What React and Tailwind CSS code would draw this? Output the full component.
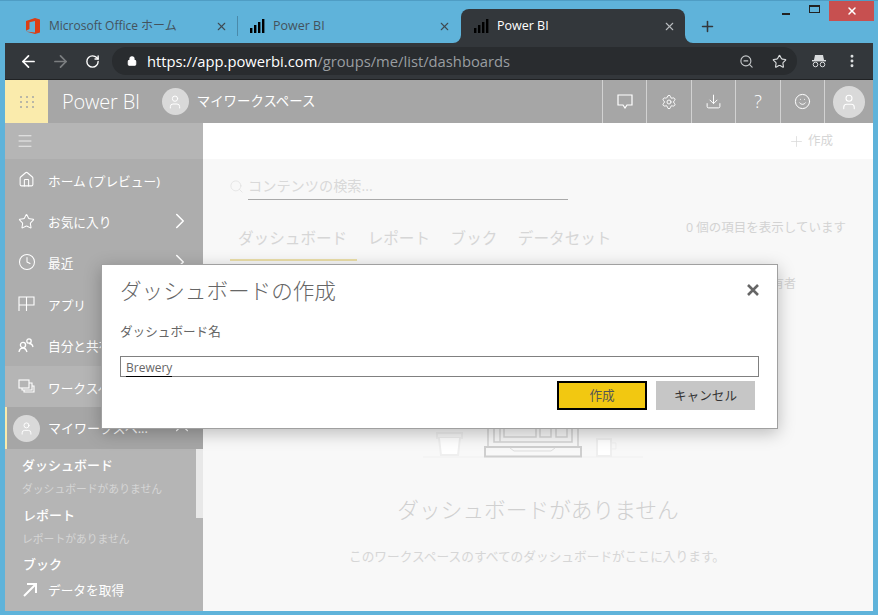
import React from "react";
import { ArrowLeft, ArrowRight, RotateCw, Lock, ZoomOut, Star, MoreVertical, X, Plus, Settings, Download, Smile, User, Home, Clock, ChevronRight, ChevronUp, Search, Menu } from "lucide-react";

const jp = "font-['Open_Sans','Noto_Sans_CJK_JP',sans-serif]";

function Bars({ className = "" }) {
  return (
    <svg width="16" height="14" viewBox="0 0 16 14" className={className}>
      <rect x="1" y="9" width="2.4" height="5" fill="currentColor" />
      <rect x="5" y="6" width="2.4" height="8" fill="currentColor" />
      <rect x="9" y="3" width="2.4" height="11" fill="currentColor" />
      <rect x="13" y="0" width="2.4" height="14" fill="currentColor" />
    </svg>
  );
}

function OfficeLogo() {
  return (
    <svg width="14" height="16" viewBox="0 0 14 16">
      <path d="M0 3 L9 0 L14 1.5 V14.5 L9 16 L0 13.5 L9 14.5 V3 L3.5 4.3 V11 L0 12.8 Z" fill="#dc3e15" />
    </svg>
  );
}

function Avatar({ size, icon }) {
  return (
    <div className="rounded-full bg-[#d9d9d9] flex items-center justify-center shrink-0" style={{ width: size, height: size }}>
      <User size={icon} strokeWidth={1.5} color="#fff" />
    </div>
  );
}

function AppIconCell({ children }) {
  return <div className="w-[44.4px] h-full border-l border-[#d2d2d2] flex items-center justify-center text-white">{children}</div>;
}

function NavItem({ icon, label, chevron }) {
  return (
    <div className="h-[41.4px] flex items-center pl-[13px] pt-[3px] shrink-0">
      <div className="w-[30px] flex justify-start text-white -mt-[3px]">{icon}</div>
      <span className="text-[12.7px] text-white whitespace-nowrap">{label}</span>
      {chevron && <ChevronRight size={26} strokeWidth={1.4} className="ml-auto mr-[10px] -mt-[3px] text-white" />}
    </div>
  );
}

export default function App() {
  return (
    <div className={`w-[878px] h-[615px] relative overflow-hidden bg-[#5fb3da] flex flex-col border-t border-[#4f9dc4] ${jp}`}>
      {/* tab strip */}
      <div className="h-[42px] relative flex items-end pl-[5px] pr-[4px] shrink-0">
        <div className="w-[232px] h-[34px] flex items-center pl-[21px] pr-[9px] text-[#44525c] text-[12px]">
          <OfficeLogo />
          <span className="ml-[9px] whitespace-nowrap">Microsoft Office ホーム</span>
          <X size={13} strokeWidth={2} className="ml-auto text-[#3f4a52]" />
        </div>
        <div className="w-px h-[20px] bg-[#4a8aaa] mb-[7px]" />
        <div className="w-[223px] h-[34px] flex items-center pl-[11px] pr-[10px] text-[#44525c] text-[12.5px]">
          <Bars className="text-black" />
          <span className="ml-[8px]">Power BI</span>
          <X size={13} strokeWidth={2} className="ml-auto text-[#3f4a52]" />
        </div>
        <div className="w-[224px] h-[34px] bg-[#33373b] rounded-t-[8px] flex items-center pl-[12px] pr-[9px] text-white text-[12.5px] relative">
          <svg width="8" height="8" viewBox="0 0 8 8" className="absolute -left-[8px] bottom-0"><path d="M8 0 V8 H0 A8 8 0 0 0 8 0 Z" fill="#33373b" /></svg>
          <svg width="8" height="8" viewBox="0 0 8 8" className="absolute -right-[8px] bottom-0"><path d="M0 0 V8 H8 A8 8 0 0 1 0 0 Z" fill="#33373b" /></svg>
          <Bars className="text-black" />
          <span className="ml-[8px]">Power BI</span>
          <X size={13} strokeWidth={2} className="ml-auto text-[#b8bcbf]" />
        </div>
        <div className="ml-[14px] h-[34px] flex items-center text-[#33373b]">
          <Plus size={17} strokeWidth={2.2} />
        </div>
        <div className="absolute right-[4px] top-0 flex items-start">
          <div className="w-[26px] h-[15px] flex items-end justify-center pb-[1px] mr-[1px]"><div className="w-[8px] h-[2px] bg-[#222]" /></div>
          <div className="w-[29px] h-[15px] flex items-center justify-center"><div className="w-[11px] h-[8px] border border-t-2 border-[#222]" /></div>
          <div className="w-[45px] h-[20px] bg-[#c75050] flex items-center justify-center"><X size={12} strokeWidth={3} color="#fff" /></div>
        </div>
      </div>
      {/* chrome toolbar */}
      <div className="h-[37px] mx-[5px] bg-[#33373b] flex items-center pl-[14px] pr-[13px] shrink-0 border-b border-[#202224]">
        <ArrowLeft size={19} strokeWidth={2.2} className="text-white" />
        <ArrowRight size={19} strokeWidth={2.2} className="text-[#7b7e80] ml-[13px]" />
        <RotateCw size={15} strokeWidth={2.2} className="text-white ml-[15px]" />
        <div className="ml-[12px] w-[685px] h-[28px] rounded-full bg-[#292c2f] flex items-center pl-[15px] pr-[10px]">
          <Lock size={10} strokeWidth={2.5} className="text-white" fill="#fff" />
          <span className="ml-[10px] text-[14.75px] text-white whitespace-nowrap">https://app.powerbi.com<span className="text-[#9a9ea1]">/groups/me/list/dashboards</span></span>
          <ZoomOut size={15} strokeWidth={1.8} className="ml-auto text-[#c5c8ca]" />
          <Star size={15} strokeWidth={1.8} className="ml-[18px] text-[#dadcdd]" />
        </div>
        <svg width="16" height="14" viewBox="0 0 16 14" className="ml-[14px] text-[#d9dbdd]">
          <path d="M4 1 H12 L13 6 H3 Z" fill="currentColor" />
          <rect x="1" y="6" width="14" height="1.4" fill="currentColor" />
          <circle cx="4.5" cy="10.5" r="2.3" fill="none" stroke="currentColor" />
          <circle cx="11.5" cy="10.5" r="2.3" fill="none" stroke="currentColor" />
        </svg>
        <MoreVertical size={16} strokeWidth={2.4} className="ml-auto text-[#dfe1e2]" />
      </div>
      {/* app bar */}
      <div className="h-[43px] mx-[5px] bg-[#a6a6a6] flex items-center shrink-0">
        <div className="w-[43px] h-full bg-[#faebac] grid grid-cols-3 gap-[3px] content-center justify-center justify-items-center px-[14px]">
          {[0,1,2,3,4,5,6,7,8].map(i => <div key={i} className="w-[2px] h-[2px] bg-[#b9b7a7]" />)}
        </div>
        <span className="ml-[14px] text-[20px] font-light text-white tracking-[-0.2px]">Power BI</span>
        <div className="ml-[22px]"><Avatar size={27} icon={16} /></div>
        <span className="ml-[8px] text-[13.4px] text-white whitespace-nowrap">マイワークスペース</span>
        <div className="ml-auto flex items-center h-full">
          <AppIconCell>
            <svg width="16" height="15" viewBox="0 0 16 15"><path d="M1 1 H15 V11 H10 L8 14 L6 11 H1 Z" fill="none" stroke="#fff" strokeWidth="1.2" /></svg>
          </AppIconCell>
          <AppIconCell><Settings size={16} strokeWidth={1.4} /></AppIconCell>
          <AppIconCell><Download size={17} strokeWidth={1.4} /></AppIconCell>
          <AppIconCell><span className="text-[18px] font-light">?</span></AppIconCell>
          <AppIconCell><Smile size={17} strokeWidth={1.4} /></AppIconCell>
          <div className="w-[49px] h-full border-l border-[#d2d2d2] flex items-center justify-center"><Avatar size={32} icon={18} /></div>
        </div>
      </div>
      {/* body */}
      <div className="flex-1 mx-[5px] mb-[4px] flex min-h-0">
        <aside className="w-[198px] bg-[#b5b5b5] flex flex-col shrink-0 overflow-hidden">
          <div className="h-[36px] flex items-center pl-[11px] shrink-0"><Menu size={18} strokeWidth={1} className="text-white" /></div>
          <div className="bg-[#adadad] flex flex-col shrink-0">
            <NavItem icon={<Home size={17} strokeWidth={1.5} />} label="ホーム (プレビュー)" />
            <NavItem icon={<Star size={17} strokeWidth={1.5} />} label="お気に入り" chevron />
            <NavItem icon={<Clock size={18} strokeWidth={1.4} />} label="最近" chevron />
            <NavItem icon={<svg width="17" height="16" viewBox="0 0 17 16" fill="none" stroke="#fff" strokeWidth="1.1"><path d="M1 1 H16 V9 H1 Z M8.5 1 V15 M1 9 V15" /></svg>} label="アプリ" />
            <NavItem icon={<svg width="17" height="15" viewBox="0 0 17 15" fill="none" stroke="#fff" strokeWidth="1.3"><circle cx="5" cy="7" r="2.6" /><circle cx="11" cy="3" r="2.2" /><path d="M1 14 C1.5 11 3 10 5 10 C7 10 8 11 9 14 M11 5.5 C13 5.5 14.5 6.5 15 9" /></svg>} label="自分と共有" />
          </div>
          <NavItem icon={<svg width="17" height="15" viewBox="0 0 17 15" fill="none" stroke="#fff" strokeWidth="1.1"><rect x="1" y="1" width="10" height="8" /><path d="M11 4 H14 V11 H4 V9 M14 7 H16 V13 H6 V11" /></svg>} label="ワークスペース" />
          <div className="h-[42px] bg-[#a6a6a6] border-l-2 border-[#faebac] flex items-center pl-[6px] shrink-0">
            <Avatar size={27} icon={15} />
            <span className="ml-[8px] text-[13px] text-white whitespace-nowrap">マイワークスペ...</span>
            <ChevronUp size={22} strokeWidth={1.2} className="ml-auto mr-[10px] text-white" />
          </div>
          <div className="flex-1 relative pl-[17px] pt-[5px]">
            <div className="absolute right-0 top-0 w-[7px] h-[69px] bg-[#e8e8e8]" />
            <div className="text-[13px] font-medium text-white h-[22px] leading-[22px]">ダッシュボード</div>
            <div className="text-[10.8px] text-[#d6d6d6] h-[24px] leading-[24px] mt-[1px]">ダッシュボードがありません</div>
            <div className="text-[13px] font-medium text-white h-[26px] leading-[26px] mt-[1px] ml-[1px]">レポート</div>
            <div className="text-[10.8px] text-[#d6d6d6] h-[20px] leading-[20px] mt-[1px]">レポートがありません</div>
            <div className="text-[13px] font-medium text-white h-[26px] leading-[26px] mt-[2px] ml-[1px]">ブック</div>
            <div className="flex items-center h-[26px] -ml-[1px]">
              <svg width="16" height="16" viewBox="0 0 16 16" fill="none" stroke="#fff" strokeWidth="2" className="ml-[1px]"><path d="M2 14 L14 2 M5 2 H14 V11" /></svg>
              <span className="ml-[10px] text-[12.7px] text-white">データを取得</span>
            </div>
          </div>
        </aside>
        <main className="flex-1 min-w-0 flex flex-col bg-[#f8f8f8]">
          <div className="h-[36px] bg-white flex items-center justify-end pr-[40px] text-[#d6d6d6] text-[12.5px] shrink-0">
            <Plus size={17} strokeWidth={1} />
            <span className="ml-[3px]">作成</span>
          </div>
          <div className="flex-1 relative flex flex-col min-h-0">
            <div className="flex items-end pl-[26px] h-[41px]">
              <Search size={15} strokeWidth={1} className="text-[#dcdcdc] mb-[6px] mr-[4px]" />
              <div className="w-[320px] h-[27px] border-b border-[#aaa] text-[14.2px] text-[#d9d9d9] leading-[26px]">コンテンツの検索...</div>
            </div>
            <div className="flex justify-between items-start h-[66px] pl-[35px] pr-[27px] pt-[27px]">
              <div className="flex gap-[20.5px] text-[15.6px] text-[#d6d6d6] whitespace-nowrap">
                <span>ダッシュボード</span><span>レポート</span><span>ブック</span><span>データセット</span>
              </div>
              <span className="text-[12.5px] text-[#d3d3d3] whitespace-nowrap -mt-[8px]">0 個の項目を表示しています</span>
            </div>
          </div>
        </main>
      </div>

      {/* backdrop content hidden under the dialog */}
      <div className="absolute left-[230px] top-[258px] w-[127px] h-[2px] bg-[#ecdfa9]" />
      <div className="absolute left-[746px] top-[274px] text-[12px] text-[#d3d3d3] w-[50px] text-right">有者</div>

      {/* empty state */}
      <div className="absolute left-[203px] right-[5px] top-[427px] flex flex-col items-center">
        <svg width="220" height="30" viewBox="0 0 220 30" className="block -ml-[10px]">
          <rect x="0" y="28.5" width="220" height="1" fill="#efefef" />
          <rect x="14" y="5" width="25" height="5" fill="none" stroke="#efefef" strokeWidth="2" />
          <path d="M16 10 L18 27 H35 L37 10" fill="#fff" stroke="#efefef" strokeWidth="2" />
          <path d="M65 0 V18 M71 0 V14 H149 V0 M155 0 V18" fill="none" stroke="#d2d2d2" strokeWidth="1.5" />
          <rect x="62" y="19" width="96" height="9.5" fill="none" stroke="#cfcfcf" strokeWidth="2" />
          <path d="M87 20 L91 23 H128 L132 20" fill="none" stroke="#dddddd" />
          <path d="M77 0 V14 M81 0 V9 H113 V0 M117 0 V9 H128 V0 M133 0 V9 H144 V0" fill="none" stroke="#d6d6d6" strokeWidth="1.5" />
          <rect x="174" y="11" width="14" height="17" fill="#fff" stroke="#efefef" strokeWidth="2" />
          <path d="M189 15 H193 V21 H189" fill="none" stroke="#efefef" />
        </svg>
        <div className="mt-[36px] text-[21.7px] font-light text-[#d0d0d0] whitespace-nowrap">ダッシュボードがありません</div>
        <div className="mt-[20px] text-[12.7px] text-[#d6d6d6] whitespace-nowrap -ml-[2px]">このワークスペースのすべてのダッシュボードがここに入ります。</div>
      </div>

      {/* dialog */}
      <div className="absolute left-[101px] top-[263px] w-[677px] h-[165px] bg-white border border-[#a0a0a0] shadow-[0_4px_16px_rgba(0,0,0,0.25)] pl-[18px] pr-[18px] pt-[10px]">
        <div className="text-[21.6px] font-light text-[#666] leading-[32px] whitespace-nowrap">ダッシュボードの作成</div>
        <svg width="12" height="12" viewBox="0 0 12 12" className="absolute right-[18px] top-[19px]" stroke="#666" strokeWidth="2.6" fill="none"><path d="M1 1 L11 11 M11 1 L1 11" /></svg>
        <div className="mt-[16px] text-[12.6px] text-[#666] leading-[18px]">ダッシュボード名</div>
        <div className="mt-[15px] h-[21px] border border-[#808080] pl-[5px] text-[12px] text-[#666] leading-[21px] relative">
          <span className="border-b border-black">Brewery</span>
        </div>
        <div className="mt-[4px] flex justify-end gap-[9px] pr-[4px]">
          <div className="w-[90px] h-[29px] bg-[#f2c811] border-[2px] border-black flex items-center justify-center text-[12.6px] text-[#555] pt-[1px]">作成</div>
          <div className="w-[99px] h-[29px] bg-[#c6c6c6] flex items-center justify-center text-[12.6px] text-[#333] pt-[1px]">キャンセル</div>
        </div>
      </div>
    </div>
  );
}
